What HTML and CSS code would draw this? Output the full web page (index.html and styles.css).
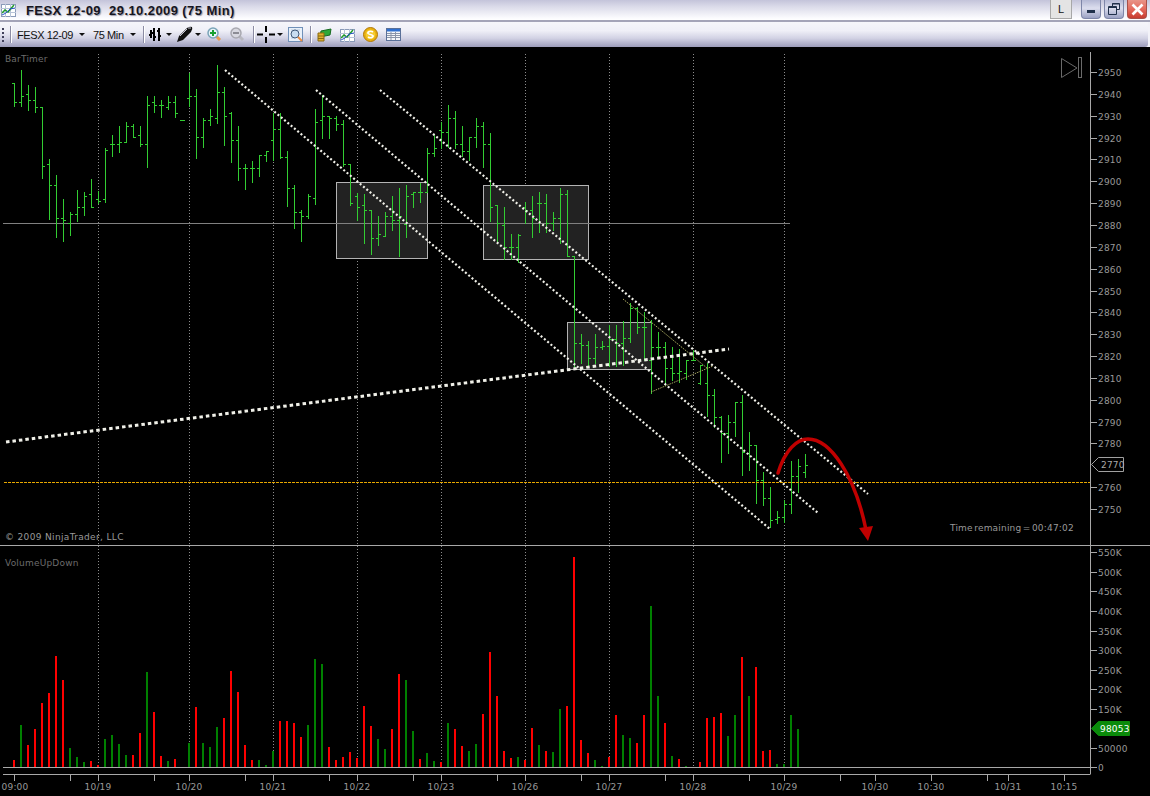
FILE: index.html
```html
<!DOCTYPE html>
<html lang="en">
<head>
<meta charset="utf-8">
<title>FESX 12-09 29.10.2009 (75 Min)</title>
<link rel="stylesheet" href="styles.css">
</head>
<body>
<div class="window">
  <header class="titlebar">
    <svg class="app-icon" width="15" height="14" viewBox="0 0 15 14">
      <rect x="0.5" y="1.5" width="14" height="12" fill="#fff" stroke="#8a9ab8"/>
      <path d="M0 5.5H15M0 9.5H15M4.500 1V14M9.500 1V14" stroke="#b8c4d8" fill="none"/>
      <path d="M1 10L4 7L7 9L13 2" stroke="#1f9a2a" stroke-width="1.500" fill="none"/>
      <path d="M1 12L5 10L9 6L14 5" stroke="#2a55c8" fill="none"/>
    </svg>
    <h1 class="title">FESX 12-09&nbsp;&nbsp;29.10.2009 (75 Min)</h1>
    <div class="win-controls">
      <span class="link-btn">L</span>
      <span class="win-btn">
        <svg width="10" height="10" viewBox="0 0 10 10"><rect x="1" y="6" width="8" height="3" fill="#20304a"/></svg>
      </span>
      <span class="win-btn">
        <svg width="12" height="12" viewBox="0 0 12 12"><path d="M4.500 3V0.500H11.500V6.500H9M0.500 3.500H8.500V11.500H0.500Z" fill="none" stroke="#20304a"/><path d="M4 1H11.500M0.500 4.500H8.500" stroke="#20304a"/></svg>
      </span>
      <span class="win-btn win-close">
        <svg width="13" height="13" viewBox="0 0 13 13"><path d="M1.500 1.500L11.500 11.500M11.500 1.500L1.500 11.500" stroke="#fff" stroke-width="2.600"/></svg>
      </span>
    </div>
  </header>

  <nav class="toolbar-wrap">
    <div class="toolbar">
      <svg class="grip" width="3" height="15" viewBox="0 0 3 15"><path d="M1 1V3M1 5V7M1 9V11M1 13V15" stroke="#40405a" stroke-width="2"/></svg>
      <span class="sep sep-a"></span>
      <span class="tb-text tb-sym">FESX 12-09</span>
      <span class="arrow arrow-a"></span>
      <span class="tb-text tb-int">75 Min</span>
      <span class="arrow arrow-b"></span>
      <span class="sep sep-b"></span>
      <svg class="ic-bars" width="12" height="15" viewBox="0 0 12 15"><path d="M2 3V11M0 8H2M5 1V14M3 6H5M5 10H7M10 1V14M8 4H10M10 9H12" stroke="#000" stroke-width="2" fill="none"/></svg>
      <span class="arrow arrow-c"></span>
      <svg class="ic-pen" width="17" height="17" viewBox="0 0 17 17"><path d="M1 16L3 10L11 2Q14 0 16 1Q17 3 15 6L7 14Z" fill="#111"/><path d="M4 10L11 3M12 2L15 2" stroke="#c8c8d8" fill="none"/></svg>
      <span class="arrow arrow-d"></span>
      <svg class="ic-zoom-in" width="15" height="15" viewBox="0 0 15 15"><path d="M9 9L13 13" stroke="#e89a50" stroke-width="3"/><circle cx="6" cy="6" r="5" fill="#e8f4f8" stroke="#7aa4b8" stroke-width="1.500"/><path d="M6 3V9M3 6H9" stroke="#18a030" stroke-width="2"/></svg>
      <svg class="ic-zoom-out" width="15" height="15" viewBox="0 0 15 15"><path d="M9 9L13 13" stroke="#b8b8c0" stroke-width="3"/><circle cx="6" cy="6" r="5" fill="#d8d8e0" stroke="#a8a8b0" stroke-width="1.500"/><path d="M3 6H9" stroke="#8c8c94" stroke-width="2"/></svg>
      <span class="sep sep-c"></span>
      <svg class="ic-cross" width="18" height="17" viewBox="0 0 18 17"><path d="M9 0V6M9 11V17M0 8.500H6M12 8.500H18" stroke="#000" stroke-width="2"/></svg>
      <span class="arrow arrow-e"></span>
      <svg class="ic-props" width="15" height="15" viewBox="0 0 15 15"><rect x="0.500" y="0.500" width="14" height="14" fill="#e8f0fa" stroke="#7090b8"/><path d="M3 3H12M3 11H7" stroke="#b8c8dc"/><circle cx="7" cy="7" r="4" fill="#c8dcf0" stroke="#405878"/><path d="M10 10L14 14" stroke="#e88a40" stroke-width="2"/></svg>
      <span class="sep sep-d"></span>
      <svg class="ic-money" width="15" height="14" viewBox="0 0 15 14"><path d="M4 3L14 1L13 7L3 9Z" fill="#2fa83a" stroke="#166a20"/><path d="M1 5H7V13H1Z" fill="#e0b030" stroke="#8a6a10"/><path d="M1 8H7M1 10.500H7" stroke="#8a6a10"/></svg>
      <svg class="ic-chart" width="15" height="14" viewBox="0 0 15 14"><rect x="0.500" y="1.500" width="14" height="12" fill="#fff" stroke="#8a9ab8"/><path d="M0 5.500H15M0 9.500H15M4.500 1V14M9.500 1V14" stroke="#b8c4d8" fill="none"/><path d="M1 10L4 7L7 9L13 2" stroke="#1f9a2a" stroke-width="1.500" fill="none"/><path d="M1 12L5 10L9 6L14 5" stroke="#2a55c8" fill="none"/></svg>
      <svg class="ic-coin" width="15" height="15" viewBox="0 0 15 15"><circle cx="7.500" cy="7.500" r="7" fill="#e8b010" stroke="#b07808"/><circle cx="7.500" cy="7.500" r="4.800" fill="#f6cc30"/><path d="M10 5Q7.500 3.500 5.500 5T7.500 7.500T9.500 10T5 10" stroke="#fff" stroke-width="1.600" fill="none"/></svg>
      <svg class="ic-table" width="15" height="13" viewBox="0 0 15 13"><rect x="0.500" y="0.500" width="14" height="12" fill="#f4f6fa" stroke="#5a7098"/><rect x="1" y="1" width="13" height="2.500" fill="#3070d0"/><path d="M1 5.500H14M1 7.500H14M1 9.500H14M5 4V12M9.500 4V12" stroke="#8a94a8" fill="none"/></svg>
    </div>
  </nav>

  <main class="chart-pane">
    <svg class="chart" width="1150" height="749" viewBox="0 47 1150 749" xmlns="http://www.w3.org/2000/svg">
      <g class="session-lines">
        <path d="M98.500 54V767M189.500 54V767M273.500 54V767M357.500 54V767M441.500 54V767M525.500 54V767M609.500 54V767M693.500 54V767M784.500 54V767"/>
      </g>
      <rect class="zone" x="336.500" y="182.500" width="91" height="76"/>
      <rect class="zone" x="483.500" y="185.500" width="105" height="74"/>
      <rect class="zone" x="567.500" y="322.500" width="84" height="47"/>
      <path class="hline" d="M3 223.500H790"/>
      <path id="price-bars" class="price-bars"/>
      <path id="vol-up" class="vol-red"/>
      <path id="vol-down" class="vol-green"/>
      <path class="channel" d="M225 70L770 529M316 90L818 513M380 90L868 494"/>
      <path class="trend" d="M6 442L729 349"/>
      <path class="triangle" d="M623 299L707 368M651 392L713 366"/>
      <path class="level" d="M4 482.500H1090"/>
      <g class="arrow-mark">
        <path class="arrow-curve" d="M778 473C785 450 797 439 808 439C830 439 855 475 866 530"/>
        <path class="arrow-head" d="M859 528L873 526L868 541Z"/>
      </g>

      <path class="frame" d="M0 545.500H1150M3 767.500H1090.500M3 774.500H1090.500M1090.500 52V774"/>
      <path class="frame" id="axis-ticks" d="M14.500 775V781M70.500 775V781M98.500 775V781M154.500 775V781M189.500 775V781M245.500 775V781M273.500 775V781M329.500 775V781M357.500 775V781M413.500 775V781M441.500 775V781M497.500 775V781M525.500 775V781M581.500 775V781M609.500 775V781M665.500 775V781M693.500 775V781M749.500 775V781M784.500 775V781M840.500 775V781M875.500 775V781M931.500 775V781M987.500 775V781M1008.500 775V781M1064.500 775V781"/>
      <g id="y-ticks" class="frame"></g>

      <g class="labels">
        <text class="label-dim" x="5" y="62">BarTimer</text>
        <text class="label-dim" x="5" y="566">VolumeUpDown</text>
        <text class="label-copy" x="5" y="539.500">© 2009 NinjaTrader, LLC</text>
        <text class="label-timer" x="950" y="530.500">Time remaining = 00:47:02</text>
      </g>

      <g class="labels" id="y-labels"></g>

      <g class="labels x-labels">
        <text x="15" y="790">09:00</text>
        <text x="98" y="790">10/19</text>
        <text x="189" y="790">10/20</text>
        <text x="273" y="790">10/21</text>
        <text x="357" y="790">10/22</text>
        <text x="441" y="790">10/23</text>
        <text x="525" y="790">10/26</text>
        <text x="609" y="790">10/27</text>
        <text x="693" y="790">10/28</text>
        <text x="784" y="790">10/29</text>
        <text x="875" y="790">10/30</text>
        <text x="931" y="790">10:30</text>
        <text x="1008" y="790">10/31</text>
        <text x="1064" y="790">10:15</text>
      </g>

      <g class="replay">
        <path d="M1061.500 58.500V77.500L1077 68Z"/>
        <rect x="1078.500" y="57.500" width="3" height="20"/>
      </g>

      <path class="tag-price" d="M1091.500 464.500L1098.500 457.500H1123.500V471.500H1098.500Z"/>
      <text class="tag-text" x="1101" y="468">2770</text>
      <path class="tag-volume" d="M1091.500 728.500L1098.500 721.500H1129.500V735.500H1098.500Z"/>
      <text class="tag-text tag-text-on" x="1100" y="732">98053</text>
    </svg>
  </main>
</div>
<script src="chart.js"></script>
</body>
</html>
```
FILE: styles.css
```css
html, body {
  margin: 0;
  padding: 0;
  background: #000;
}

.window {
  width: 1150px;
  height: 796px;
  display: flex;
  flex-direction: column;
  overflow: hidden;
  background: #000;
  font-family: "Liberation Sans", Arial, sans-serif;
}

.titlebar {
  height: 20px;
  display: flex;
  align-items: center;
  padding: 0 3px 0 1px;
  background: linear-gradient(#c4c4da 0, #dcdcea 35%, #fbfbfe 90%, #fff 100%);
  border-bottom: 2px solid #a4a4b8;
  flex: none;
}

.app-icon {
  margin-right: 10px;
  flex: none;
}

.title {
  margin: 0;
  font-size: 13px;
  font-weight: bold;
  letter-spacing: 0.42px;
  color: #15151f;
  text-shadow: 1px 1px 1px #9a9aa8;
  white-space: nowrap;
}

.win-controls {
  margin-left: auto;
  display: flex;
  align-items: stretch;
  height: 20px;
}

.link-btn {
  width: 20px;
  height: 18px;
  margin-right: 9px;
  display: flex;
  align-items: center;
  justify-content: center;
  background: #e4e4e4;
  border: 1px solid #a8a8a8;
  border-top: 0;
  font-size: 11px;
  color: #111;
}

.win-btn {
  width: 20px;
  height: 19px;
  margin-left: 3px;
  display: flex;
  align-items: center;
  justify-content: center;
  box-sizing: border-box;
  border: 1px solid #7e86a8;
  border-top: 0;
  border-radius: 0 0 4px 4px;
  background: linear-gradient(#b4b8d4, #dcdeee 45%, #9ca2c4);
}

.win-btn:nth-child(2) {
  margin-left: 0;
}

.win-close {
  border-color: #a85048;
  background: linear-gradient(#e89488, #e46a5c 50%, #c83c30);
}

.toolbar-wrap {
  height: 25px;
  flex: none;
  background: #f2f2f8;
}

.toolbar {
  height: 25px;
  margin-right: 2px;
  display: flex;
  align-items: center;
  padding-left: 2px;
  border-radius: 0 0 3px 0;
  background: linear-gradient(#f6f6fb 0, #efeff7 35%, #d2d2e4 65%, #9c9cba 100%);
}

.sep {
  width: 1px;
  height: 17px;
  flex: none;
  background: #8c8ca4;
  border-right: 1px solid #fff;
}

.tb-text {
  font-size: 11px;
  letter-spacing: -0.4px;
  color: #111;
  white-space: nowrap;
  flex: none;
}

.tb-sym { width: 55px; margin-left: 5px; }
.tb-int { width: 30px; margin-left: 8px; }

.arrow {
  width: 0;
  height: 0;
  flex: none;
  border-left: 3px solid transparent;
  border-right: 3px solid transparent;
  border-top: 3px solid #111;
}

.grip { flex: none; }
.toolbar svg { flex: none; }

.sep-a { margin-left: 5px; }
.arrow-a { margin-left: 7px; }
.arrow-b { margin-left: 7px; }
.sep-b { margin-left: 7px; }
.ic-bars { margin-left: 4px; }
.arrow-c { margin-left: 5px; }
.ic-pen { margin-left: 4px; }
.arrow-d { margin-left: 2px; }
.ic-zoom-in { margin-left: 6px; }
.ic-zoom-out { margin-left: 8px; }
.sep-c { margin-left: 8px; }
.ic-cross { margin-left: 2px; }
.arrow-e { margin-left: 2px; }
.ic-props { margin-left: 5px; }
.sep-d { margin-left: 7px; }
.ic-money { margin-left: 5px; }
.ic-chart { margin-left: 8px; }
.ic-coin { margin-left: 8px; }
.ic-table { margin-left: 8px; }

.chart-pane {
  flex: 1;
  min-height: 0;
}

.chart {
  display: block;
}

.session-lines path {
  fill: none;
  stroke: #8c8c8c;
  stroke-width: 1;
  stroke-dasharray: 1 2;
}

.zone {
  fill: #222;
  stroke: #b4b4b4;
  stroke-width: 1;
}

.hline {
  fill: none;
  stroke: #808080;
}

.price-bars {
  fill: none;
  stroke: #32cd32;
  stroke-width: 1;
  shape-rendering: crispEdges;
}

.vol-red,
.vol-green {
  fill: none;
  stroke-width: 2;
  shape-rendering: crispEdges;
}

.vol-red { stroke: #ff0000; }
.vol-green { stroke: #008000; }

.triangle {
  fill: none;
  stroke: #a8a860;
  stroke-width: 1;
  stroke-dasharray: 1.500 1;
}

.channel {
  fill: none;
  stroke: #f0f0e8;
  stroke-width: 2.200;
  stroke-dasharray: 2 2.300;
}

.trend {
  fill: none;
  stroke: #f0f0e8;
  stroke-width: 3;
  stroke-dasharray: 3.500 3;
}

.level {
  fill: none;
  stroke: #e8a800;
  stroke-dasharray: 3 1;
}

.arrow-curve {
  fill: none;
  stroke: #c00000;
  stroke-width: 3.500;
  stroke-linecap: round;
}

.arrow-head {
  fill: #c00000;
}

.frame {
  fill: none;
  stroke: #a8a8a8;
  stroke-width: 1;
}

.labels text {
  font-family: "DejaVu Sans", sans-serif;
  font-size: 9px;
  letter-spacing: 0.2px;
  fill: #999;
}

.labels .label-dim {
  fill: #6c6c6c;
}

.labels .label-copy {
  letter-spacing: 0.34px;
}

.labels .label-timer {
  letter-spacing: 0.2px;
  word-spacing: -1.700px;
}

.x-labels text {
  text-anchor: middle;
}

.replay path,
.replay rect {
  fill: none;
  stroke: #6a6a6a;
}

.tag-price {
  fill: #000;
  stroke: #a0a0a0;
}

.tag-volume {
  fill: #0a8a0a;
  stroke: #0a8a0a;
}

.tag-text {
  font-family: "DejaVu Sans", sans-serif;
  font-size: 9px;
  letter-spacing: 0.2px;
  fill: #a8a8a8;
}

.tag-text-on {
  fill: #fff;
}
```
FILE: chart.js
```js
// [high y, low y, open y, close y] per bar, 7px apart from x = 14
var bars = [
  [83,106,83,102],[70,106,102,96],[85,110,94,100],[87,112,100,107],[107,178,107,166],
  [159,219,164,185],[175,237,185,218],[199,241,218,220],[212,235,223,214],[190,221,214,207],
  [192,215,207,196],[179,207,194,207],[191,203,199,201],[148,202,199,150],[135,156,144,144],
  [126,152,144,142],[122,142,142,126],[124,137,126,137],[126,146,135,144],[96,167,144,105],
  [96,112,102,105],[100,117,105,105],[96,109,107,102],[96,117,102,113],[120,120,120,120],
  [73,106,98,96],[89,158,96,137],[118,147,137,120],[109,125,120,116],[65,123,118,92],
  [87,145,92,116],[112,162,113,140],[126,180,140,168],[164,189,168,168],[161,182,168,168],
  [155,176,168,155],[151,161,155,151],[113,160,140,129],[113,158,129,157],[151,206,157,188],
  [185,228,188,212],[210,241,212,216],[194,218,216,196],[109,204,198,122],[95,138,120,116],
  [116,138,116,118],[116,130,118,124],[120,166,124,164],[164,205,164,203],[193,220,196,207],
  [194,243,205,210],[210,254,210,238],[216,245,238,234],[212,236,236,216],[196,230,216,220],
  [188,256,220,216],[185,237,224,196],[192,207,194,192],[183,202,192,192],[148,192,192,153],
  [135,156,153,148],[122,148,130,132],[105,147,132,118],[111,148,118,144],[126,156,144,151],
  [137,160,151,137],[118,147,137,126],[122,167,126,144],[133,221,144,207],[205,243,205,223],
  [207,259,225,247],[234,259,247,247],[234,262,247,235],[202,223,207,210],[196,237,210,218],
  [192,232,203,203],[194,232,203,223],[212,230,223,218],[188,243,218,194],[190,256,194,256],
  [256,368,256,343],[334,363,343,345],[341,366,345,358],[334,363,358,347],[341,349,347,346],
  [325,366,346,339],[325,366,339,343],[321,365,343,338],[303,342,338,308],[307,333,308,327],
  [312,360,327,327],[320,393,360,347],[332,358,347,347],[342,385,347,368],[347,380,368,373],
  [349,382,373,371],[360,379,373,360],[350,360,360,360],[365,384,383,365],[363,416,383,395],
  [389,427,395,417],[416,462,417,433],[415,453,433,422],[402,436,422,402],[395,475,402,452],
  [432,470,453,445],[445,503,445,480],[472,505,480,498],[487,527,498,520],[511,523,519,517],
  [500,522,517,504],[461,513,504,476],[459,492,476,466],[454,477,472,465]
];

// Volume bar heights from the baseline; negative = down volume (green)
var volume = [
  7,-42,22,38,64,74,111,87,-19,-10,-5,6,2,-28,-32,-23,-12,12,34,-95,55,11,-6,8,0,-24,60,-24,
  -20,-40,49,96,75,22,7,-7,-2,-16,46,46,44,30,-42,-108,-103,20,7,10,15,9,61,41,-28,-18,38,93,
  -87,-36,8,-14,-6,5,-44,38,21,-16,-23,53,115,71,16,9,-10,7,39,-22,16,-15,-58,61,210,27,14,
  -7,-1,10,52,-32,-29,24,52,-161,-71,44,-11,8,-1,0,5,49,50,54,-31,-52,110,-71,100,16,17,-3,-3,
  -52,-38
];

var SVG_NS = "http://www.w3.org/2000/svg";

var barPath = bars.map(function (b, i) {
  var x = 14 + i * 7;
  var c = x + 0.5;
  return "M" + c + " " + b[0] + "V" + (b[1] + 1) +
    "M" + (x - 2) + " " + (b[2] + 0.5) + "H" + x +
    "M" + (x + 1) + " " + (b[3] + 0.5) + "H" + (x + 3);
}).join("");
document.getElementById("price-bars").setAttribute("d", barPath);

var up = "", down = "";
volume.forEach(function (v, i) {
  if (!v) return;
  var seg = "M" + (14 + i * 7) + " 767V" + (767 - Math.abs(v));
  if (v > 0) up += seg; else down += seg;
});
document.getElementById("vol-up").setAttribute("d", up);
document.getElementById("vol-down").setAttribute("d", down);

var ticks = "";
var labels = document.getElementById("y-labels");

function addLabel(text, y) {
  var row = Math.round(y);
  ticks += "M1091 " + (row + 0.5) + "H1097";
  var t = document.createElementNS(SVG_NS, "text");
  t.setAttribute("x", "1098");
  t.setAttribute("y", String(row + 4));
  t.textContent = text;
  labels.appendChild(t);
}

for (var p = 2950; p >= 2750; p -= 10) {
  if (p !== 2770) addLabel(String(p), 72 + (2950 - p) * 2.185);
}
addLabel("0", 767);
addLabel("50000", 747.5);
for (var k = 100; k <= 550; k += 50) {
  if (k !== 100) addLabel(k + "K", 767.5 - (k / 50) * 19.56);
}

var tickPath = document.createElementNS(SVG_NS, "path");
tickPath.setAttribute("d", ticks);
document.getElementById("y-ticks").appendChild(tickPath);
```
